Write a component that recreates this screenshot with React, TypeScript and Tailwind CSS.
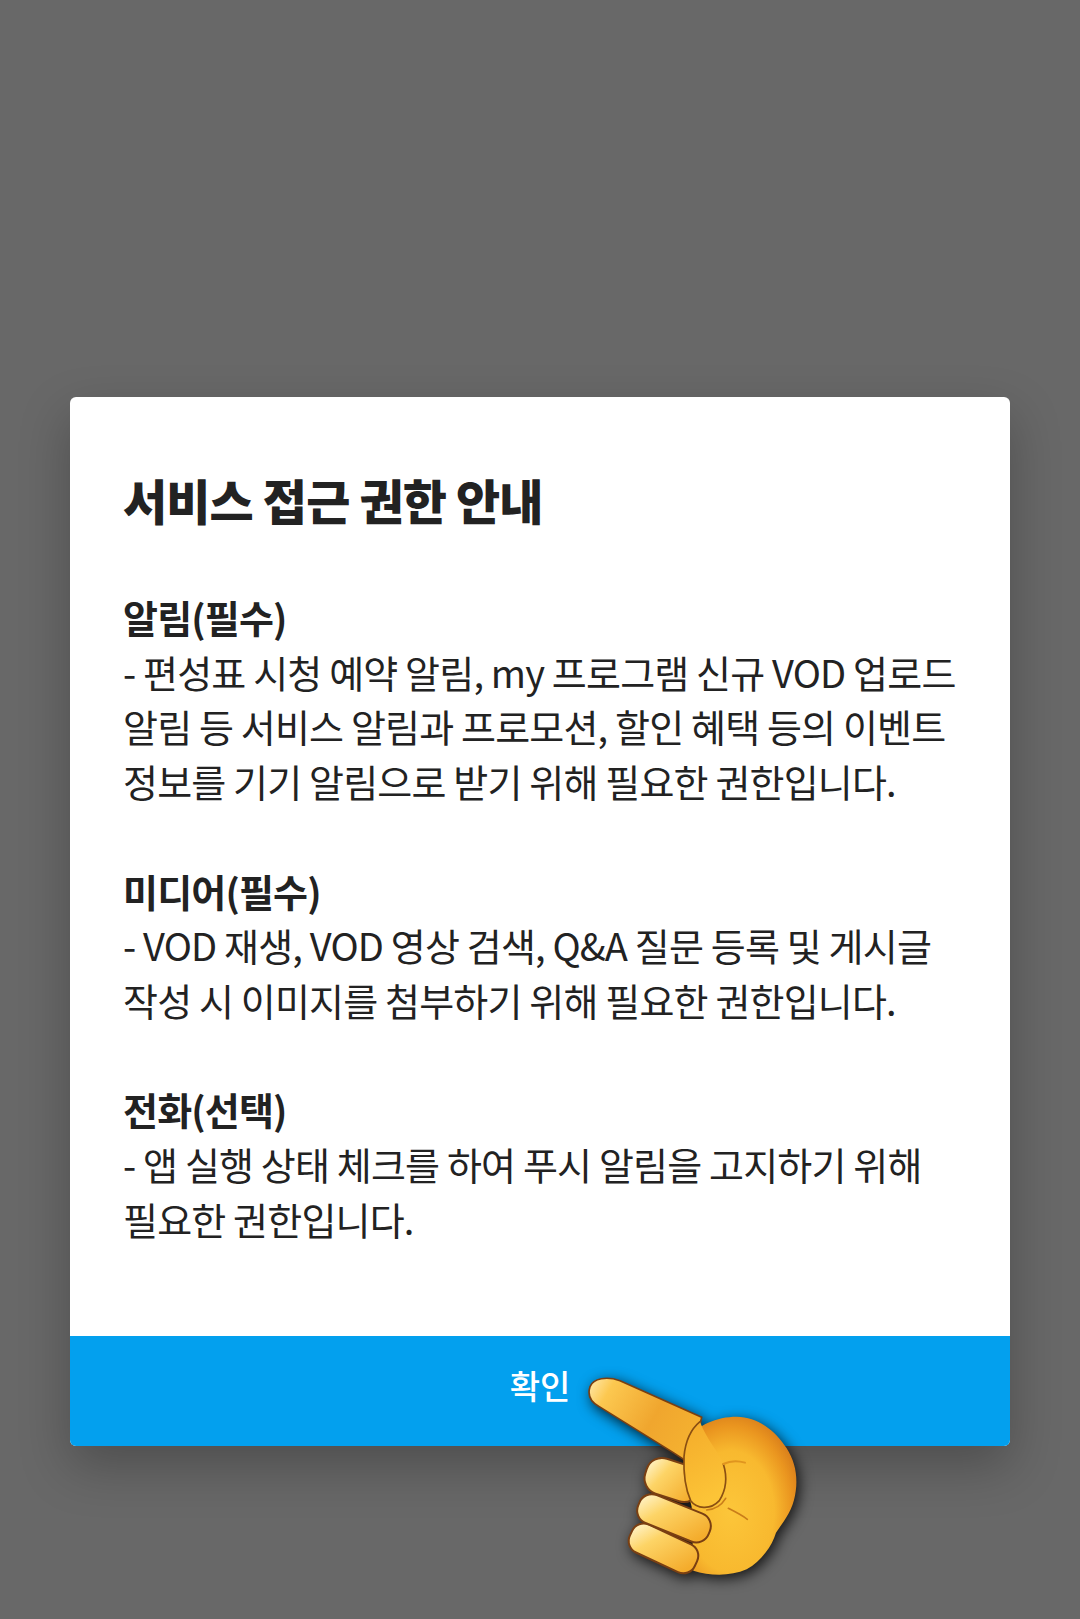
import React from "react";

function Hand() {
  return (
    <svg viewBox="0 0 840 837" className="absolute left-[560px] top-[1340px] w-[280px] h-[279px] blur-[0.7px] drop-shadow-[3px_4px_7px_rgba(0,0,0,0.8)]">
      <defs>
        <linearGradient id="idx" x1="0" y1="0" x2="1" y2="0.45">
          <stop offset="0" stopColor="#ffeab0" />
          <stop offset="0.2" stopColor="#fcc850" />
          <stop offset="0.65" stopColor="#f0a62e" />
          <stop offset="1" stopColor="#f4b030" />
        </linearGradient>
        <linearGradient id="fing" x1="0" y1="0.2" x2="1" y2="0.5">
          <stop offset="0" stopColor="#fff3c8" />
          <stop offset="0.35" stopColor="#fdd466" />
          <stop offset="1" stopColor="#f4ac2c" />
        </linearGradient>
        <radialGradient id="palm" cx="0.42" cy="0.6" r="0.64">
          <stop offset="0" stopColor="#fcc63a" />
          <stop offset="0.6" stopColor="#f8b92f" />
          <stop offset="0.85" stopColor="#ea951f" />
          <stop offset="1" stopColor="#d97f1b" />
        </radialGradient>
        <linearGradient id="thumb" x1="0" y1="0" x2="0.3" y2="1">
          <stop offset="0" stopColor="#f4ab2a" />
          <stop offset="1" stopColor="#fcc437" />
        </linearGradient>
      </defs>
      <path d="M90 140C100 115 140 108 180 122L425 232L392 372L340 338L118 200C92 186 82 165 90 140Z" fill="url(#idx)" stroke="#7a3f12" strokeWidth="5" />
      <rect x="254" y="365" width="170" height="110" rx="48" transform="rotate(18 339 420)" fill="url(#fing)" stroke="#7a3f12" strokeWidth="6" />
      <path d="M385 300C410 255 470 230 530 230C595 232 645 270 680 325C710 372 716 425 702 480C692 520 668 548 648 578C636 618 605 662 560 688C510 710 450 708 400 692L395 500L370 400Z" fill="url(#palm)" />
      <rect x="203" y="579" width="215" height="92" rx="38" transform="rotate(25 310 625)" fill="url(#fing)" stroke="#7a3f12" strokeWidth="6" />
      <rect x="228" y="490" width="228" height="90" rx="40" transform="rotate(22 342 535)" fill="url(#fing)" stroke="#7a3f12" strokeWidth="6" />
      <path d="M420 245C392 268 376 305 372 350C370 400 376 445 392 482C410 506 450 512 478 482C498 450 502 410 490 372C480 340 440 300 420 245Z" fill="url(#thumb)" />
      <path d="M420 245C392 268 376 305 372 350C370 400 376 445 392 482C410 506 450 512 478 482C498 450 502 410 490 372" fill="none" stroke="#8a4f12" strokeWidth="5" strokeLinecap="round" />
      <path d="M490 372C510 362 535 362 555 368" fill="none" stroke="#e0951f" strokeWidth="6" strokeLinecap="round" />
      <path d="M440 510C465 508 485 495 497 475M505 505C525 515 545 525 562 538" fill="none" stroke="#c97d1a" strokeWidth="5" strokeLinecap="round" />
    </svg>
  );
}

export default function App() {
  return (
    <div className="relative h-[1619px] w-[1080px] overflow-hidden bg-[#686868] flex flex-col items-center pt-[397px] font-['Noto_Sans_CJK_KR','Noto_Sans',sans-serif]">
      <div className="w-[940px] rounded-[6px] overflow-hidden bg-white shadow-[0_20px_50px_rgba(0,0,0,0.25)]">
        <div className="h-[939px] pl-[53px] pr-[40px] pt-[66px] text-[#222222]">
          <h1 className="text-[48px] leading-[72px] font-black tracking-[-0.9px]">서비스 접근 권한 안내</h1>
          <div className="mt-[55px] text-[38px] leading-[54.7px] tracking-[-0.82px]">
            <p className="font-bold">알림(필수)</p>
            <p>- 편성표 시청 예약 알림, my 프로그램 신규 VOD 업로드</p>
            <p>알림 등 서비스 알림과 프로모션, 할인 혜택 등의 이벤트</p>
            <p className="mb-[54.7px]">정보를 기기 알림으로 받기 위해 필요한 권한입니다.</p>
            <p className="font-bold">미디어(필수)</p>
            <p>- VOD 재생, VOD 영상 검색, Q&amp;A 질문 등록 및 게시글</p>
            <p className="mb-[54.7px]">작성 시 이미지를 첨부하기 위해 필요한 권한입니다.</p>
            <p className="font-bold">전화(선택)</p>
            <p>- 앱 실행 상태 체크를 하여 푸시 알림을 고지하기 위해</p>
            <p>필요한 권한입니다.</p>
          </div>
        </div>
        <div className="h-[110px] bg-[#03a0ee] flex items-center justify-center pb-[10px] text-white text-[33px] font-medium">확인</div>
      </div>
      <Hand />
    </div>
  );
}
